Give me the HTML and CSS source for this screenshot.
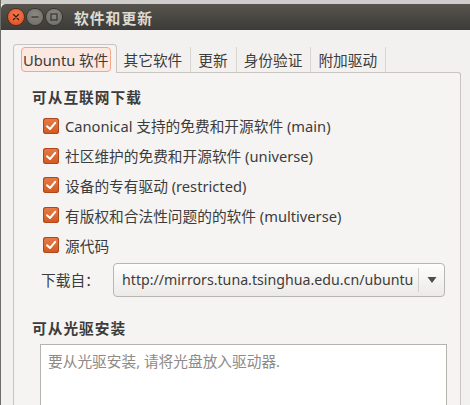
FILE: index.html
```html
<!DOCTYPE html>
<html lang="zh-CN">
<head>
<meta charset="utf-8">
<title>软件和更新</title>
<link rel="stylesheet" href="styles.css">
</head>
<body>
<div class="window">
  <div class="top-strip"></div>
  <div class="titlebar">
    <div class="wbuttons">
      <span class="wbtn close">
        <svg width="16" height="16" viewBox="0 0 16 16"><path d="M5.5 5.5 L10.5 10.5 M10.5 5.5 L5.5 10.5" stroke="#3a1a10" stroke-width="1.3" stroke-linecap="round"/></svg>
      </span>
      <span class="wbtn">
        <svg width="16" height="16" viewBox="0 0 16 16"><path d="M4.5 8 H11.5" stroke="#35342f" stroke-width="1.3"/></svg>
      </span>
      <span class="wbtn">
        <svg width="16" height="16" viewBox="0 0 16 16"><rect x="5" y="5" width="6" height="6" fill="none" stroke="#35342f" stroke-width="1.2"/></svg>
      </span>
    </div>
    <span class="title">软件和更新</span>
  </div>
  <div class="body">
    <div class="tabs">
      <div class="tab active"><span class="focus">Ubuntu 软件</span></div>
      <div class="tab">其它软件</div>
      <div class="tab">更新</div>
      <div class="tab">身份验证</div>
      <div class="tab">附加驱动</div>
    </div>
    <div class="pane">
      <div class="heading">可从互联网下载</div>
      <div class="checks">
        <div class="check"><span class="box"><svg width="16" height="16" viewBox="0 0 16 16"><path d="M4 8.3 L7 11 L12.2 4.8" fill="none" stroke="#fff" stroke-width="2" stroke-linecap="round" stroke-linejoin="round"/></svg></span>Canonical 支持的免费和开源软件 (main)</div>
        <div class="check"><span class="box"><svg width="16" height="16" viewBox="0 0 16 16"><path d="M4 8.3 L7 11 L12.2 4.8" fill="none" stroke="#fff" stroke-width="2" stroke-linecap="round" stroke-linejoin="round"/></svg></span>社区维护的免费和开源软件 (universe)</div>
        <div class="check"><span class="box"><svg width="16" height="16" viewBox="0 0 16 16"><path d="M4 8.3 L7 11 L12.2 4.8" fill="none" stroke="#fff" stroke-width="2" stroke-linecap="round" stroke-linejoin="round"/></svg></span>设备的专有驱动 (restricted)</div>
        <div class="check"><span class="box"><svg width="16" height="16" viewBox="0 0 16 16"><path d="M4 8.3 L7 11 L12.2 4.8" fill="none" stroke="#fff" stroke-width="2" stroke-linecap="round" stroke-linejoin="round"/></svg></span>有版权和合法性问题的的软件 (multiverse)</div>
        <div class="check"><span class="box"><svg width="16" height="16" viewBox="0 0 16 16"><path d="M4 8.3 L7 11 L12.2 4.8" fill="none" stroke="#fff" stroke-width="2" stroke-linecap="round" stroke-linejoin="round"/></svg></span>源代码</div>
      </div>
      <div class="source-row">
        <span class="source-label">下载自：</span>
        <div class="combo">
          <span class="combo-text">http://mirrors.tuna.tsinghua.edu.cn/ubuntu</span>
          <span class="combo-arrow"><svg width="10" height="8" viewBox="0 0 10 8"><path d="M0.5 1 H9.5 L5 7 Z" fill="#4c4c4c"/></svg></span>
        </div>
      </div>
      <div class="heading heading2">可从光驱安装</div>
      <div class="cdbox">要从光驱安装, 请将光盘放入驱动器.</div>
    </div>
  </div>
</div>
</body>
</html>
```
FILE: styles.css
```css
html, body {
  margin: 0;
  padding: 0;
  background: #f2f1f0;
  overflow: hidden;
}
.window {
  width: 470px;
  height: 405px;
  display: flex;
  flex-direction: column;
  font-family: "Noto Sans", "Noto Sans CJK SC", sans-serif;
  font-size: 14.7px;
  color: #3c3c3c;
  background: #f2f1f0;
  border-left: 1px solid #6e6c66;
  box-sizing: border-box;
  overflow: hidden;
}
.top-strip {
  height: 4px;
  background: #cfcdca;
  flex: none;
}
.titlebar {
  height: 26px;
  flex: none;
  display: flex;
  align-items: center;
  background: linear-gradient(#57544d, #3c3b37);
  border-top-left-radius: 5px;
  padding-left: 7px;
}
.wbuttons {
  display: flex;
  gap: 3px;
}
.wbtn {
  width: 16px;
  height: 16px;
  border-radius: 50%;
  background: radial-gradient(circle at 50% 35%, #8a8881, #6c6a64);
  box-shadow: 0 0 0 1px #35342f;
  display: flex;
}
.wbtn.close {
  background: radial-gradient(circle at 50% 35%, #f47a4d, #df4a1f);
  box-shadow: 0 0 0 1px #5a2a18;
}
.title {
  margin-left: 12px;
  color: #dfdbd2;
  font-weight: bold;
  font-size: 14.8px;
  letter-spacing: 1px;
}
.body {
  flex: 1;
  display: flex;
  flex-direction: column;
  padding: 14px 9px 0 12px;
}
.tabs {
  display: flex;
  height: 28px;
  align-items: stretch;
  position: relative;
  z-index: 1;
}
.tab {
  display: flex;
  align-items: center;
  padding: 0 8px 0 7px;
  border-right: 1px solid #dad7d3;
  margin-top: 3px;
  height: 25px;
  box-sizing: border-box;
}
.tab.active {
  margin-top: 0;
  height: 29px;
  padding: 0 5px 0 7px;
  background: #f5f4f2;
  border: 1px solid #c8c5c0;
  border-bottom: none;
  border-radius: 4px 4px 0 0;
}
.focus {
  display: flex;
  align-items: center;
  height: 23px;
  padding: 0 1px;
  border: 1px solid #f3a58d;
  border-radius: 4px;
  background: #fbe8e1;
}
.pane {
  flex: 1;
  background: #f5f4f2;
  border: 1px solid #c8c5c0;
  border-bottom: none;
  border-radius: 0 3px 0 0;
  padding: 14px 13px 0 18px;
}
.heading {
  font-weight: bold;
  line-height: 20px;
  letter-spacing: 1px;
}
.checks {
  margin-top: 4px;
  display: flex;
  flex-direction: column;
}
.check {
  height: 29.8px;
  display: flex;
  align-items: center;
  padding-left: 11px;
}
.box {
  width: 16px;
  height: 16px;
  border-radius: 3px;
  background: linear-gradient(#e77c48, #d2581f);
  box-shadow: inset 0 0 0 1px #b0461a;
  margin-right: 6px;
  display: flex;
}
.source-row {
  margin-top: 3px;
  display: flex;
  align-items: center;
  padding-left: 9px;
  padding-right: 2px;
}
.source-label {
  flex: none;
  width: 72px;
}
.combo {
  flex: 1;
  min-width: 0;
  height: 34px;
  box-sizing: border-box;
  border: 1px solid #b9b6b1;
  border-radius: 4px;
  background: linear-gradient(#fdfdfc, #eceae7);
  display: flex;
  align-items: center;
}
.combo-text {
  flex: 1;
  min-width: 0;
  padding-left: 8px;
  white-space: nowrap;
  overflow: hidden;
  font-size: 14.2px;
}
.combo-arrow {
  flex: none;
  width: 25px;
  height: 24px;
  border-left: 1px solid #d3d0cb;
  display: flex;
  align-items: center;
  justify-content: center;
}
.heading2 {
  margin-top: 21px;
}
.cdbox {
  margin-top: 6px;
  margin-left: 8px;
  height: 80px;
  background: #ffffff;
  border: 1px solid #b6b3ae;
  padding: 7px 7px;
  color: #8e8b87;
  line-height: 18px;
}
```
